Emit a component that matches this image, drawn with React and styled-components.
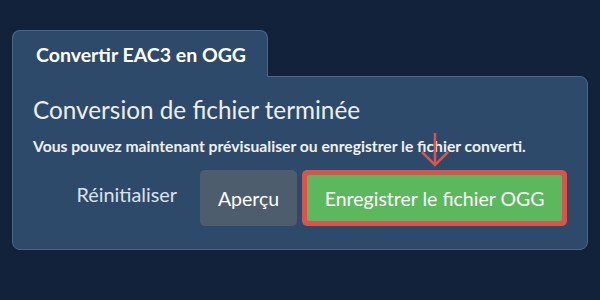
import styled, { createGlobalStyle } from 'styled-components'

const GlobalStyle = createGlobalStyle`
    html, body {
        margin: 0;
        padding: 0;
        background: #12223a;
        font-family: Lato, "Noto Sans", sans-serif;
    }
`

export default function App(){
    return(
        <>
            <GlobalStyle/>
            <S.Page>
                <S.Widget>
                    <S.Tab>Convertir EAC3 en OGG</S.Tab>
                    <S.Panel>
                        <S.Title>Conversion de fichier terminée</S.Title>
                        <S.Description>Vous pouvez maintenant prévisualiser ou enregistrer le fichier converti.</S.Description>
                        <S.Actions>
                            <S.TextButton>Réinitialiser</S.TextButton>
                            <S.Button>Aperçu</S.Button>
                            <S.HighlightWrap>
                                <S.Arrow width="30" height="36" viewBox="0 0 30 36">
                                    <path d="M15 1 V33 M2 20 L15 33 L28 20" fill="none" stroke="#d9534f" strokeWidth="2.5"/>
                                </S.Arrow>
                                <S.Button primary>Enregistrer le fichier OGG</S.Button>
                            </S.HighlightWrap>
                        </S.Actions>
                    </S.Panel>
                </S.Widget>
            </S.Page>
        </>
    )
}

const S = {
    Page: styled.div`
        width: 600px;
        height: 300px;
        padding: 30px 12px 0 12px;
        box-sizing: border-box;
    `,

    Widget: styled.div`
        width: 576px;
        display: flex;
        flex-direction: column;
        align-items: flex-start;
    `,

    Tab: styled.div`
        width: 256px;
        height: 47px;
        box-sizing: border-box;
        padding: 0 0 0 23px;
        display: flex;
        align-items: center;
        background: #2e4a6b;
        border: 1px solid #4c6688;
        border-bottom: none;
        border-radius: 8px 8px 0 0;
        color: #ffffff;
        font-size: 19.5px;
        font-weight: 700;
        margin-bottom: -1px;
        position: relative;
        z-index: 1;
    `,

    Panel: styled.div`
        width: 576px;
        height: 174px;
        box-sizing: border-box;
        padding: 17px 20px 19px 20px;
        background: #2e4a6b;
        border: 1px solid #4c6688;
        border-radius: 0 8px 8px 8px;
        display: flex;
        flex-direction: column;
    `,

    Title: styled.h2`
        margin: 0;
        font-size: 24.3px;
        font-weight: 400;
        color: #eceff2;
        line-height: 32px;
    `,

    Description: styled.p`
        margin: 10px 0 0 0;
        font-size: 15.7px;
        font-weight: 700;
        color: #eef1f4;
        line-height: 20px;
    `,

    Actions: styled.div`
        margin-top: auto;
        display: flex;
        justify-content: flex-end;
        align-items: center;
        gap: 5px;
    `,

    TextButton: styled.button`
        background: none;
        border: none;
        height: 56px;
        padding: 0 18px 0 0;
        font-family: inherit;
        font-size: 19.8px;
        color: #dde2e8;
        margin-bottom: 8px;
    `,

    Button: styled.button`
        height: ${props => props.primary ? '46px' : '56px'};
        padding: ${props => props.primary ? '0 17.5px' : '0 18px'};
        box-sizing: border-box;
        border: none;
        border-radius: ${props => props.primary ? '2px' : '5px'};
        background: ${props => props.primary ? '#5cb85c' : '#4e5d6e'};
        color: #ffffff;
        font-family: inherit;
        font-size: 19.5px;
        white-space: nowrap;
    `,

    HighlightWrap: styled.div`
        position: relative;
        padding: 5px;
        background: #d9534f;
        border-radius: 5px;
        display: flex;
    `,

    Arrow: styled.svg`
        position: absolute;
        left: 50%;
        top: -38px;
        transform: translateX(-50%);
    `,
}
